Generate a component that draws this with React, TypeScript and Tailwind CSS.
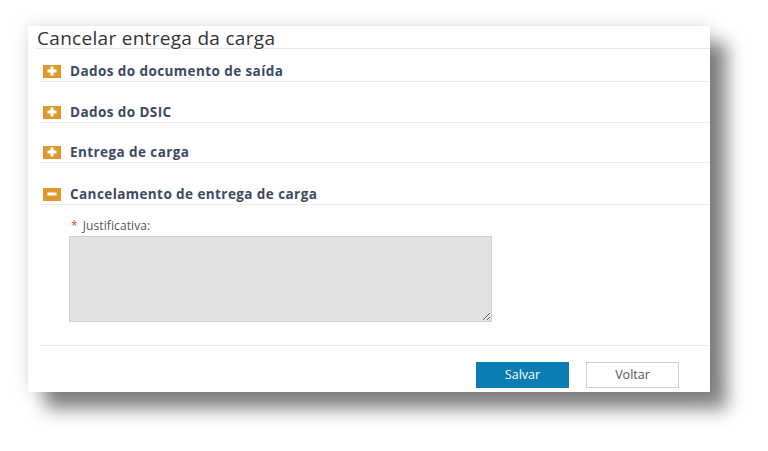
import React from "react";

const sections = [
  { title: "Dados do documento de saída", open: false, mt: "mt-[12px]" },
  { title: "Dados do DSIC", open: false, mt: "mt-[20px]" },
  { title: "Entrega de carga", open: false, mt: "mt-[19px]" },
  { title: "Cancelamento de entrega de carga", open: true, mt: "mt-[21px]" },
];

const ToggleIcon = ({ open }: { open: boolean }) => (
  <span className="ml-[3px] w-[18px] h-[13px] bg-[#e0972b] flex items-center justify-center shrink-0">
    <svg width="10" height="10" viewBox="0 0 10 10">
      <rect x="0.5" y="3.5" width="9" height="3" fill="#fff" />
      {!open && <rect x="3.5" y="0.5" width="3" height="9" fill="#fff" />}
    </svg>
  </span>
);

export default function App() {
  return (
    <main
      className="w-[768px] h-[451px] bg-white overflow-hidden pl-[28px] pt-[26px]"
      style={{ fontFamily: '"Open Sans", "Liberation Sans", sans-serif' }}
    >
      <div className="w-[682px] h-[366px] bg-white flex flex-col shadow-[17px_17px_17px_rgba(0,0,0,0.48),0_0_16px_rgba(0,0,0,0.15)]">
        {/* Title */}
        <div className="ml-[9px] h-[23px] border-b border-[#e6e6e6] flex items-end">
          <h1 className="text-[19px] leading-[22px] tracking-[0.3px] text-[#333] -mb-[1px]">
            Cancelar entrega da carga
          </h1>
        </div>

        {/* Accordion */}
        <div className="ml-[12px] flex flex-col">
          {sections.map((s, i) => (
            <div
              key={i}
              className={`${s.mt} h-[21px] flex items-center gap-[9px] border-b border-[#ececec]`}
            >
              <ToggleIcon open={s.open} />
              <span className="text-[13.5px] font-bold tracking-[0.42px] text-[#3a4a63] leading-[20px]">
                {s.title}
              </span>
            </div>
          ))}

          {/* Open section body */}
          <div className="ml-[29px] mt-[14px] flex flex-col">
            <label className="text-[12px] leading-[14px] tracking-[0.1px] text-[#555]">
              <span className="text-[#e04848] mr-[5px] ml-[2px]">*</span>
              Justificativa:
            </label>
            <textarea className="mt-[3px] w-[423px] h-[86px] bg-[#e1e2e4] border border-[#cfcfcf] outline-none" />
          </div>

          <div className="mt-[23px] border-b border-[#ececec]" />

          <div className="mt-[16px] flex justify-end gap-[17px] mr-[31px]">
            <button className="w-[93px] h-[26px] bg-[#0b7cb4] text-white text-[12.5px]">
              Salvar
            </button>
            <button className="w-[93px] h-[26px] bg-white border border-[#cfcfcf] text-[#555] text-[12.5px]">
              Voltar
            </button>
          </div>
        </div>
      </div>
    </main>
  );
}
